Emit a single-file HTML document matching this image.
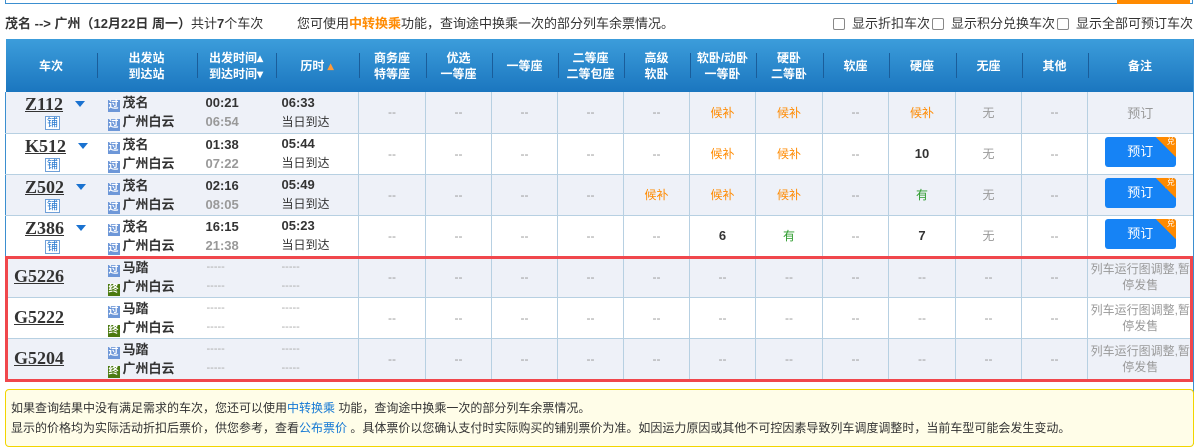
<!DOCTYPE html>
<html><head><meta charset="utf-8"><style>
*{margin:0;padding:0;box-sizing:border-box}
body{width:1197px;height:444px;overflow:hidden;background:#fff;font-family:"Liberation Sans","Noto Sans CJK SC",sans-serif;font-size:12px;color:#333;position:relative}
.topbox{position:absolute;left:5px;top:-10px;width:1188px;height:14px;border:1px solid #3b8fd0}
.orange{position:absolute;left:1117px;top:0;width:73px;height:4px;background:#ff8a00}
.title{position:absolute;left:5px;top:13px;font-size:13px;color:#333}
.title b{font-weight:bold}
.tip{position:absolute;left:297px;top:13px;font-size:13px}
.or{color:#ff8a00;font-weight:bold}
.chk{position:absolute;top:13px;right:4px;font-size:13px}
.chk span{display:inline-block;width:12px;height:12px;border:1px solid #888;border-radius:2px;vertical-align:-2px;margin:0 7px 0 2px}
table{position:absolute;left:5px;top:39px;border-collapse:collapse;table-layout:fixed;width:1187px}
th{height:53px;color:#fff;font-weight:bold;font-size:12px;line-height:16px;background:linear-gradient(#3c9ddb,#1b76bf);position:relative}
th:not(:first-child)::before{content:"";position:absolute;left:0;top:14px;height:25px;border-left:1px solid #1a5d9a}
td{height:41px;border-left:1px solid #b7d0e2;border-bottom:1px solid #b7d0e2;text-align:center;color:#999;vertical-align:middle}
tr.a td{background:#eef1f8}
td.f{border-left:1px solid #3b8fd0;text-align:left;position:relative}
td.s,td.t,td.d{border-left:none;text-align:left}
.no{font-size:18px;font-weight:bold;color:#333;text-decoration:underline;font-family:"Liberation Serif","Noto Serif CJK SC",serif}
.pu{display:inline-block;width:15px;height:14px;border:1px solid #6fa0d8;color:#2a7ad0;font-size:11px;line-height:12px;text-align:center;background:#fff}
.tri{display:inline-block;width:0;height:0;border-left:5px solid transparent;border-right:5px solid transparent;border-top:6px solid #1a72d0;margin-left:12px;vertical-align:3px}
.ic{display:inline-block;width:12px;height:12px;color:#fff;font-size:10px;line-height:12px;text-align:center;vertical-align:-1px;margin-right:3px}
.g{background:#6d97d8}.z{background:#4b7a10}
.st{color:#333;font-weight:bold;font-size:13px;line-height:19px}
.tm{font-weight:bold;font-size:13px;color:#333;line-height:19px}
.tm .gr{color:#999}
.du{font-size:12px;color:#333;line-height:19px}
.du b{font-size:13px}
.h{color:#ff8a00}
.n{color:#333;font-weight:bold;font-size:13px}
.y{color:#2a9a2a}
.btn{display:inline-block;width:71px;height:30px;background:#1683f5;color:#fff;border-radius:3px;line-height:30px;font-size:13px;position:relative;overflow:hidden}
.btn::after{content:"兑";position:absolute;right:0;top:0;width:20px;height:20px;background:linear-gradient(225deg,#ff8a00 50%,transparent 50%);color:#fff;font-size:8px;line-height:10px;text-align:right;padding-right:1px}
.dash{color:#aaa;line-height:19px;font-size:11px}
.red{position:absolute;left:5px;top:256px;width:1188px;height:126px;border:3px solid #f0474c}
.note{position:absolute;left:5px;top:389px;width:1189px;height:58px;border:1px solid #f2d500;border-radius:4px;background:#fffde8;padding:8px 0 0 5px;font-size:12px;line-height:20px;color:#333}
.note a{color:#1478d4}
.rb{position:absolute;left:1193px;top:39px;height:405px;border-left:1px solid #3b8fd0}
</style></head><body>
<div class="topbox"></div><div class="orange"></div>
<div class="title"><b>茂名 --&gt; 广州（12月22日 周一）</b>共计<b>7</b>个车次</div>
<div class="tip">您可使用<span class="or">中转换乘</span>功能，查询途中换乘一次的部分列车余票情况。</div>
<div class="chk"><span></span>显示折扣车次<span></span>显示积分兑换车次<span></span>显示全部可预订车次</div>
<table>
<colgroup><col style="width:91px"><col style="width:100px"><col style="width:79px"><col style="width:83px"><col style="width:67px"><col style="width:66px"><col style="width:66px"><col style="width:66px"><col style="width:66px"><col style="width:66px"><col style="width:67px"><col style="width:66px"><col style="width:67px"><col style="width:66px"><col style="width:66px"><col style="width:105px"></colgroup>
<tr><th>车次</th><th>出发站<br>到达站</th><th>出发时间▴<br>到达时间▾</th><th>历时 <span style="color:#ff9a3a">▴</span></th><th>商务座<br>特等座</th><th>优选<br>一等座</th><th>一等座</th><th>二等座<br>二等包座</th><th>高级<br>软卧</th><th>软卧/动卧<br>一等卧</th><th>硬卧<br>二等卧</th><th>软座</th><th>硬座</th><th>无座</th><th>其他</th><th>备注</th></tr>
<tr class="a"><td class="f" style="padding-left:19px"><span class="no">Z112</span><span class="tri"></span><br><span class="pu" style="margin-left:20px">铺</span></td><td class="s" style="padding-left:11px"><div class="st"><span class="ic g">过</span>茂名</div><div class="st"><span class="ic g">过</span>广州白云</div></td><td class="t" style="padding-left:9px"><div class="tm">00:21<br><span class="gr">06:54</span></div></td><td class="d" style="padding-left:6px"><div class="du"><b>06:33</b><br>当日到达</div></td><td>--</td><td>--</td><td>--</td><td>--</td><td>--</td><td class="h">候补</td><td class="h">候补</td><td>--</td><td class="h">候补</td><td>无</td><td>--</td><td style="font-size:13px">预订</td></tr>
<tr><td class="f" style="padding-left:19px"><span class="no">K512</span><span class="tri"></span><br><span class="pu" style="margin-left:20px">铺</span></td><td class="s" style="padding-left:11px"><div class="st"><span class="ic g">过</span>茂名</div><div class="st"><span class="ic g">过</span>广州白云</div></td><td class="t" style="padding-left:9px"><div class="tm">01:38<br><span class="gr">07:22</span></div></td><td class="d" style="padding-left:6px"><div class="du"><b>05:44</b><br>当日到达</div></td><td>--</td><td>--</td><td>--</td><td>--</td><td>--</td><td class="h">候补</td><td class="h">候补</td><td>--</td><td class="n">10</td><td>无</td><td>--</td><td><span class="btn">预订</span></td></tr>
<tr class="a"><td class="f" style="padding-left:19px"><span class="no">Z502</span><span class="tri"></span><br><span class="pu" style="margin-left:20px">铺</span></td><td class="s" style="padding-left:11px"><div class="st"><span class="ic g">过</span>茂名</div><div class="st"><span class="ic g">过</span>广州白云</div></td><td class="t" style="padding-left:9px"><div class="tm">02:16<br><span class="gr">08:05</span></div></td><td class="d" style="padding-left:6px"><div class="du"><b>05:49</b><br>当日到达</div></td><td>--</td><td>--</td><td>--</td><td>--</td><td class="h">候补</td><td class="h">候补</td><td class="h">候补</td><td>--</td><td class="y">有</td><td>无</td><td>--</td><td><span class="btn">预订</span></td></tr>
<tr><td class="f" style="padding-left:19px"><span class="no">Z386</span><span class="tri"></span><br><span class="pu" style="margin-left:20px">铺</span></td><td class="s" style="padding-left:11px"><div class="st"><span class="ic g">过</span>茂名</div><div class="st"><span class="ic g">过</span>广州白云</div></td><td class="t" style="padding-left:9px"><div class="tm">16:15<br><span class="gr">21:38</span></div></td><td class="d" style="padding-left:6px"><div class="du"><b>05:23</b><br>当日到达</div></td><td>--</td><td>--</td><td>--</td><td>--</td><td>--</td><td class="n">6</td><td class="y">有</td><td>--</td><td class="n">7</td><td>无</td><td>--</td><td><span class="btn">预订</span></td></tr>
<tr class="a"><td class="f" style="padding-left:8px"><span class="no">G5226</span></td><td class="s" style="padding-left:11px"><div class="st"><span class="ic g">过</span>马踏</div><div class="st"><span class="ic z">终</span>广州白云</div></td><td class="t" style="padding-left:10px"><div class="dash">-----<br>-----</div></td><td class="d" style="padding-left:6px"><div class="dash">-----<br>-----</div></td><td>--</td><td>--</td><td>--</td><td>--</td><td>--</td><td>--</td><td>--</td><td>--</td><td>--</td><td>--</td><td>--</td><td style="line-height:16px">列车运行图调整,暂停发售</td></tr>
<tr><td class="f" style="padding-left:8px"><span class="no">G5222</span></td><td class="s" style="padding-left:11px"><div class="st"><span class="ic g">过</span>马踏</div><div class="st"><span class="ic z">终</span>广州白云</div></td><td class="t" style="padding-left:10px"><div class="dash">-----<br>-----</div></td><td class="d" style="padding-left:6px"><div class="dash">-----<br>-----</div></td><td>--</td><td>--</td><td>--</td><td>--</td><td>--</td><td>--</td><td>--</td><td>--</td><td>--</td><td>--</td><td>--</td><td style="line-height:16px">列车运行图调整,暂停发售</td></tr>
<tr class="a"><td class="f" style="padding-left:8px"><span class="no">G5204</span></td><td class="s" style="padding-left:11px"><div class="st"><span class="ic g">过</span>马踏</div><div class="st"><span class="ic z">终</span>广州白云</div></td><td class="t" style="padding-left:10px"><div class="dash">-----<br>-----</div></td><td class="d" style="padding-left:6px"><div class="dash">-----<br>-----</div></td><td>--</td><td>--</td><td>--</td><td>--</td><td>--</td><td>--</td><td>--</td><td>--</td><td>--</td><td>--</td><td>--</td><td style="line-height:16px">列车运行图调整,暂停发售</td></tr>
</table>
<div class="rb"></div>
<div class="red"></div>
<div class="note">如果查询结果中没有满足需求的车次，您还可以使用<a>中转换乘</a> 功能，查询途中换乘一次的部分列车余票情况。<br>显示的价格均为实际活动折扣后票价，供您参考，查看<a>公布票价</a> 。具体票价以您确认支付时实际购买的铺别票价为准。如因运力原因或其他不可控因素导致列车调度调整时，当前车型可能会发生变动。</div>
</body></html>
